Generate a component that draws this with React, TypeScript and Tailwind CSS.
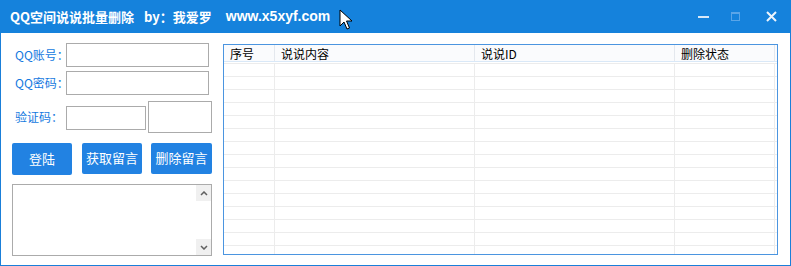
import React from "react";

const cjk = { fontFamily: '"Noto Sans CJK SC", "Noto Sans", sans-serif' };

const columns = [
  { title: "序号", w: "w-[51px]" },
  { title: "说说内容", w: "w-[200px]" },
  { title: "说说ID", w: "w-[200px]" },
  { title: "删除状态", w: "w-[100px]" },
];

const rows = Array.from({ length: 15 }, (_, i) => i);

function Cursor() {
  return (
    <svg className="absolute left-[339px] top-[9px]" width="14" height="22" viewBox="0 0 14 22">
      <path d="M1 1 L1 17 L5 13 L8 20 L10.5 19 L7.5 12 L13 12 Z" fill="#fff" stroke="#000" strokeWidth="1" strokeLinejoin="miter" />
    </svg>
  );
}

const App: React.FC = () => {
  return (
    <div className="w-[791px] h-[266px] flex flex-col bg-white overflow-hidden" style={cjk}>
      {/* title bar */}
      <div className="relative h-[33px] bg-[#1582dc] flex items-center pl-[10px] text-white font-bold text-[13px] shrink-0">
        <span>QQ空间说说批量删除</span>
        <span className="ml-[10px]">by：我爱罗</span>
        <span className="ml-[14px] text-[14px]" style={{ fontFamily: '"Liberation Sans", sans-serif' }}>www.x5xyf.com</span>
        <Cursor />
        <div className="ml-auto flex items-center h-full">
          <div className="w-[32px] flex justify-center">
            <div className="w-[11px] h-[2px] bg-[#d7e8f8]" />
          </div>
          <div className="w-[32px] flex justify-center">
            <div className="w-[9px] h-[9px] border border-[#5aa5e8] border-t-2" />
          </div>
          <div className="w-[40px] flex justify-center">
            <svg width="11" height="11" viewBox="0 0 11 11">
              <path d="M1 1 L10 10 M10 1 L1 10" stroke="#eef5fc" strokeWidth="2" />
            </svg>
          </div>
        </div>
      </div>

      {/* body */}
      <div className="flex-1 flex border-x border-b border-[#1a7fd9] pl-[11px]">
        {/* left panel */}
        <div className="w-[201px] pt-[10px] flex flex-col">
          <div className="flex items-center h-[24px]">
            <span className="w-[54px] pl-[3px] text-[12px] text-[#1479e0] whitespace-nowrap">QQ账号：</span>
            <input className="w-[143px] h-[24px] border border-[#ababab] outline-none" />
          </div>
          <div className="flex items-center h-[24px] mt-[4px]">
            <span className="w-[54px] pl-[3px] text-[12px] text-[#1479e0] whitespace-nowrap">QQ密码：</span>
            <input className="w-[143px] h-[24px] border border-[#ababab] outline-none" />
          </div>
          <div className="flex items-center h-[32px] mt-[6px]">
            <span className="w-[54px] pl-[3px] text-[12px] text-[#1479e0] whitespace-nowrap">验证码：</span>
            <input className="w-[80px] h-[24px] border border-[#ababab] outline-none mt-[2px]" />
            <div className="ml-[2px] w-[64px] h-[32px] border border-[#ababab]" />
          </div>
          <div className="flex items-center mt-[9px] h-[33px] text-white text-[13px]">
            <button className="w-[60px] h-[32px] mt-[1px] bg-[#2282e2] rounded-[2px]">登陆</button>
            <button className="ml-[10px] w-[60px] h-[31px] -mt-[1px] bg-[#2282e2] rounded-[2px]">获取留言</button>
            <button className="ml-[9px] w-[61px] h-[31px] -mt-[1px] bg-[#2282e2] rounded-[2px]">删除留言</button>
          </div>
          <div className="mt-[9px] w-[200px] h-[72px] border border-[#ababab] flex justify-end">
            <div className="w-[15px] h-full flex flex-col justify-between">
              <div className="h-[16px] bg-[#f0f0f0] flex items-center justify-center">
                <svg width="8" height="5" viewBox="0 0 8 5">
                  <path d="M1 4 L4 1 L7 4" fill="none" stroke="#606060" strokeWidth="1.5" />
                </svg>
              </div>
              <div className="h-[16px] bg-[#f0f0f0] flex items-center justify-center">
                <svg width="8" height="5" viewBox="0 0 8 5">
                  <path d="M1 1 L4 4 L7 1" fill="none" stroke="#606060" strokeWidth="1.5" />
                </svg>
              </div>
            </div>
          </div>
        </div>

        {/* table */}
        <div className="ml-[10px] mt-[11px] w-[555px] h-[211px] border border-[#4b95e0] overflow-hidden">
          <div className="flex h-[17px] bg-[#fafbfd] border-b border-[#d9e8f7]">
            {columns.map((c) => (
              <div key={c.title} className={`${c.w} h-full border-r border-[#e4e8ee] pl-[6px] text-[12px] leading-[17px] text-black`}>
                {c.title}
              </div>
            ))}
          </div>
          <div className="mt-[1px] border-t border-[#ececec]">
            {rows.map((r) => (
              <div key={r} className="flex h-[13px] border-b border-[#ececec]">
                {columns.map((c) => (
                  <div key={c.title} className={`${c.w} h-full border-r border-[#ececec]`} />
                ))}
              </div>
            ))}
          </div>
        </div>
      </div>
    </div>
  );
};

export default App;
